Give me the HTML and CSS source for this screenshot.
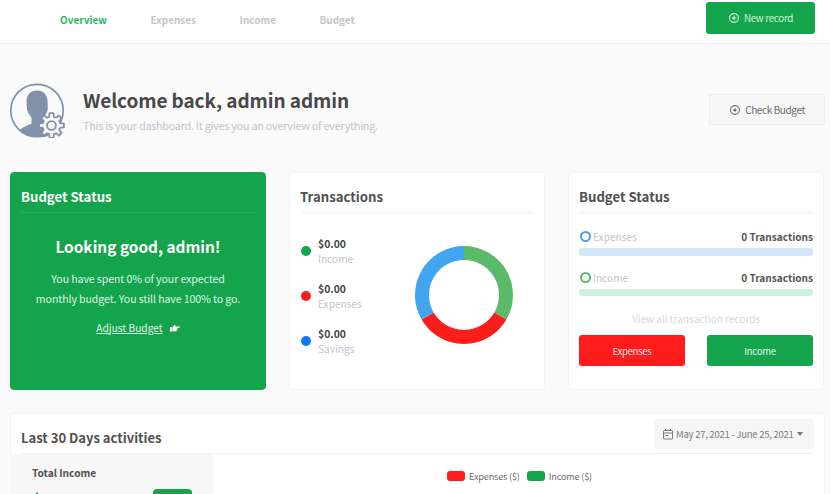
FILE: index.html
```html
<!DOCTYPE html>
<html lang="en">
<head>
  <meta charset="UTF-8" />
  <meta name="viewport" content="width=device-width, initial-scale=1.0"/>
  <title>Dashboard</title>
  <link rel="stylesheet" href="styles.css">
</head>
<body>
  <header class="topbar">
    <nav class="nav">
      <a class="nav-link active">Overview</a>
      <a class="nav-link">Expenses</a>
      <a class="nav-link">Income</a>
      <a class="nav-link">Budget</a>
    </nav>
    <button class="btn-new">
      <svg class="icon-sm" viewBox="0 0 12 12"><circle cx="6" cy="6" r="4.4" fill="none" stroke="currentColor" stroke-width="1.1"/><path d="M6 3.8v4.4M3.8 6h4.4" stroke="currentColor" stroke-width="1.1"/></svg>
      New record
    </button>
  </header>

  <main class="page">
    <section class="hero">
      <svg class="avatar" viewBox="0 0 55 55">
        <circle cx="27" cy="27.5" r="26.2" fill="none" stroke="#8091a9" stroke-width="1.7"/>
        <path d="M27 7.5C33.5 7.5 37.5 11.5 37.7 19.5L37.7 26.5C37 30.5 35 32.5 33.5 34.5L33.5 37.5L37.5 53.5L27 54.1C19.5 54.1 13.5 51.5 9.5 47.5C11.5 44.5 17.5 42.5 21.5 40.5L21.5 34.5C19 31.5 17.3 28.5 16.9 25.5L16.5 19.5C16.5 11.5 20.5 7.5 27 7.5Z" fill="#8091a9"/>
        <g transform="translate(41.5 42.5)">
          <polygon points="8.69,-2.33 12.35,-1.96 12.35,1.96 8.69,2.33 7.79,4.5 10.11,7.35 7.35,10.11 4.5,7.79 2.33,8.69 1.96,12.35 -1.96,12.35 -2.33,8.69 -4.5,7.79 -7.35,10.11 -10.11,7.35 -7.79,4.5 -8.69,2.33 -12.35,1.96 -12.35,-1.96 -8.69,-2.33 -7.79,-4.5 -10.11,-7.35 -7.35,-10.11 -4.5,-7.79 -2.33,-8.69 -1.96,-12.35 1.96,-12.35 2.33,-8.69 4.5,-7.79 7.35,-10.11 10.11,-7.35 7.79,-4.5" fill="#fafafa" stroke="#8091a9" stroke-width="1.8" stroke-linejoin="round"/>
          <circle r="4.4" fill="none" stroke="#8091a9" stroke-width="1.8"/>
        </g>
      </svg>
      <div class="hero-text">
        <h1>Welcome back, admin admin</h1>
        <p>This is your dashboard. It gives you an overview of everything.</p>
      </div>
      <button class="btn-check">
        <svg class="icon-sm" viewBox="0 0 12 12"><circle cx="6" cy="6" r="4.4" fill="none" stroke="currentColor" stroke-width="1.1"/><circle cx="6" cy="6" r="1.6" fill="currentColor"/></svg>
        Check Budget
      </button>
    </section>

    <section class="cards">
      <div class="card card-green">
        <h2 class="card-title">Budget Status</h2>
        <div class="status-body">
          <h3>Looking good, admin!</h3>
          <p>You have spent 0% of your expected<br>monthly budget. You still have 100% to go.</p>
          <div class="adjust">
            <a>Adjust Budget</a>
            <svg class="hand" viewBox="0 0 11 8"><path d="M0 3h2v5H0zM2.6 3.2L5 .6c.5-.5 1.2 0 .9.7L5.5 2.3H10c1.2 0 1.2 1.5 0 1.5H8.2c.5.7.1 1.3-.3 1.4.2.7-.2 1.2-.7 1.3.1.8-.5 1.2-1.1 1.2H4.3C3.5 7.7 3 7.2 2.6 7z" fill="#fff"/></svg>
          </div>
        </div>
      </div>

      <div class="card">
        <h2 class="card-title">Transactions</h2>
        <div class="trans-body">
          <ul class="trans-list">
            <li><span class="dot dot-green"></span><div><b>$0.00</b><span class="muted">Income</span></div></li>
            <li><span class="dot dot-red"></span><div><b>$0.00</b><span class="muted">Expenses</span></div></li>
            <li><span class="dot dot-blue"></span><div><b>$0.00</b><span class="muted">Savings</span></div></li>
          </ul>
          <svg class="donut" viewBox="0 0 100 100" fill="none" stroke-width="14">
            <path d="M50 8A42 42 0 0 1 86.37 71" stroke="#5cbb6a"/>
            <path d="M86.37 71A42 42 0 0 1 13.63 71" stroke="#ff1c1c"/>
            <path d="M13.63 71A42 42 0 0 1 50 8" stroke="#42a5f0"/>
          </svg>
        </div>
      </div>

      <div class="card">
        <h2 class="card-title">Budget Status</h2>
        <div class="bar-group">
          <div class="bar-head">
            <span class="ring ring-blue"></span><span class="muted">Expenses</span>
            <b>0 Transactions</b>
          </div>
          <div class="bar bar-blue"></div>
        </div>
        <div class="bar-group">
          <div class="bar-head">
            <span class="ring ring-green"></span><span class="muted">Income</span>
            <b>0 Transactions</b>
          </div>
          <div class="bar bar-green"></div>
        </div>
        <a class="view-all">View all transaction records</a>
        <div class="btn-row">
          <button class="btn btn-red">Expenses</button>
          <button class="btn btn-green">Income</button>
        </div>
      </div>
    </section>

    <section class="card activity">
      <div class="activity-head">
        <h2>Last 30 Days activities</h2>
        <button class="date-btn">
          <svg class="icon-sm" viewBox="0 0 12 12" fill="none" stroke="currentColor"><rect x="1.5" y="2.5" width="9" height="8.5" rx=".6"/><path d="M1.5 5h9M3.5 1v2M8.5 1v2M3.5 7.5h3"/></svg>
          May 27, 2021 - June 25, 2021
          <span class="caret"></span>
        </button>
      </div>
      <div class="activity-body">
        <aside class="side">
          <h4>Total Income</h4>
          <div class="side-row">
            <svg class="arrow" viewBox="0 0 10 12"><path d="M5 0l4 5H6v7H4V5H1z" fill="#14a54c"/></svg>
            <span class="badge"></span>
          </div>
        </aside>
        <div class="chart">
          <div class="legend">
            <span class="swatch swatch-red"></span><span>Expenses ($)</span>
            <span class="swatch swatch-green"></span><span>Income ($)</span>
          </div>
        </div>
      </div>
    </section>
  </main>
</body>
</html>
```

FILE: styles.css
```css
html, body {
  height: 100%;
  overflow: hidden;
}
body {
  margin: 0;
  background: #fafafa;
  color: #4a4a4a;
  font-family: "Noto Sans CJK SC", "Open Sans", sans-serif;
  font-size: 12px;
}
h1, h2, h3, h4, p, ul {
  margin: 0;
  padding: 0;
}
button {
  font-family: inherit;
  cursor: pointer;
}
.icon-sm {
  width: 12px;
  height: 12px;
  flex: none;
}

/* top bar */
.topbar {
  display: flex;
  justify-content: space-between;
  height: 41px;
  padding: 2px 15px 0 60px;
  background: #fff;
  border-bottom: 1px solid #f0f0f0;
}
.nav {
  display: flex;
  gap: 43.5px;
  height: 34px;
  align-items: center;
}
.nav-link {
  color: #c3c6cc;
  font-size: 10px;
  font-weight: 700;
}
.nav-link.active {
  color: #2bb866;
}
.btn-new {
  display: flex;
  align-items: center;
  justify-content: center;
  gap: 4px;
  width: 109px;
  height: 32px;
  border: 0;
  border-radius: 3px;
  background: #14a54c;
  color: #d5f3e0;
  font-size: 9.8px;
  letter-spacing: -0.3px;
}

/* hero */
.page {
  padding: 38px 5px 0 10px;
}
.hero {
  display: flex;
  align-items: center;
  height: 56px;
  margin-bottom: 34px;
}
.avatar {
  width: 55px;
  height: 55px;
  flex: none;
  margin-right: 18px;
}
.hero-text {
  flex: 1;
  padding-bottom: 1px;
}
.hero-text h1 {
  font-size: 19px;
  line-height: 27px;
  font-weight: 700;
  color: #484848;
  letter-spacing: -0.1px;
}
.hero-text p {
  margin-top: 4px;
  font-size: 10.8px;
  line-height: 16px;
  color: #bfc6cf;
  letter-spacing: -0.25px;
}
.btn-check {
  display: flex;
  align-items: center;
  justify-content: center;
  gap: 4px;
  width: 116px;
  height: 31px;
  margin-bottom: 1px;
  border: 1px solid #ececec;
  border-radius: 2px;
  background: #f7f7f7;
  color: #6b6b6b;
  font-size: 10px;
  letter-spacing: -0.4px;
}

/* cards */
.cards {
  display: grid;
  grid-template-columns: repeat(3, 256px);
  gap: 23px;
  margin-bottom: 23px;
}
.card {
  height: 218px;
  box-sizing: border-box;
  padding: 0 10px;
  background: #fff;
  border: 1px solid #f3f3f3;
  border-radius: 4px;
}
.card-title {
  height: 40px;
  padding-top: 14px;
  box-sizing: border-box;
  border-bottom: 1px solid #f1f1f1;
  font-size: 13.2px;
  line-height: 20px;
  font-weight: 700;
  color: #505050;
}
.card-green {
  background: #14a54c;
  border-color: #14a54c;
  color: #dff6e7;
}
.card-green .card-title {
  color: #fff;
  border-bottom-color: #2bb25e;
}
.status-body {
  text-align: center;
}
.status-body h3 {
  margin-top: 21px;
  font-size: 15.4px;
  line-height: 24px;
  font-weight: 700;
  color: #fff;
}
.status-body p {
  margin-top: 11px;
  font-size: 10.6px;
  line-height: 19.5px;
  letter-spacing: -0.1px;
}
.adjust {
  display: flex;
  justify-content: center;
  align-items: center;
  gap: 7px;
  margin-top: 10px;
  font-size: 10.2px;
  line-height: 20px;
}
.adjust a {
  text-decoration: underline;
}
.hand {
  width: 10px;
  height: 8px;
}

/* transactions */
.trans-body {
  display: flex;
  justify-content: space-between;
  align-items: center;
  padding: 21px 20px 0 1px;
}
.trans-list {
  list-style: none;
  display: flex;
  flex-direction: column;
  gap: 15px;
  margin-top: 2px;
}
.trans-list li {
  display: flex;
  align-items: center;
  gap: 7px;
}
.trans-list b {
  display: block;
  font-size: 10.4px;
  line-height: 15px;
  color: #444;
}
.muted {
  color: #bfc5cc;
  font-size: 10.1px;
  line-height: 15px;
}
.trans-list .muted {
  display: block;
}
.dot {
  width: 10px;
  height: 10px;
  border-radius: 50%;
}
.dot-green { background: #14a54c; }
.dot-red { background: #ff1c1c; }
.dot-blue { background: #0a7aff; }
.donut {
  width: 100px;
  height: 100px;
}

/* budget bars */
.bar-group {
  margin-top: 14px;
}
.bar-group + .bar-group {
  margin-top: 12px;
}
.bar-head {
  display: flex;
  align-items: center;
  gap: 2px;
  height: 18px;
  margin-bottom: 3px;
}
.bar-head b {
  margin-left: auto;
  font-size: 10.1px;
  color: #555;
}
.ring {
  width: 11px;
  height: 11px;
  margin-left: 1px;
  box-sizing: border-box;
  border: 2px solid;
  border-radius: 50%;
}
.ring-blue { border-color: #4a9ff5; }
.ring-green { border-color: #5cbb6a; }
.bar {
  height: 8px;
  border-radius: 3px;
}
.bar-blue { background: #d0e6f8; }
.bar-green { height: 7px; background: #cdf3df; }
.view-all {
  display: block;
  margin-top: 14px;
  font-size: 10px;
  line-height: 18px;
  color: #d3d8dd;
  text-align: center;
}
.btn-row {
  display: flex;
  justify-content: space-between;
  margin-top: 7px;
}
.btn {
  width: 106px;
  height: 31px;
  border: 0;
  border-radius: 3px;
  font-size: 9.6px;
  letter-spacing: -0.3px;
  color: #e6f5ea;
}
.btn-red { background: #ff1c1c; color: #ffe0e0; }
.btn-green { background: #14a54c; }

/* last 30 days */
.activity {
  height: 200px;
}
.activity-head {
  display: flex;
  justify-content: space-between;
  height: 40px;
  padding-top: 5px;
  box-sizing: border-box;
  border-bottom: 1px solid #f1f1f1;
}
.activity-head h2 {
  padding-top: 9px;
  font-size: 13px;
  line-height: 20px;
  font-weight: 700;
  color: #505050;
}
.date-btn {
  display: flex;
  align-items: center;
  gap: 2px;
  width: 160px;
  height: 30px;
  padding: 0 0 0 8px;
  border: 0;
  border-radius: 3px;
  background: #f6f6f6;
  color: #7a7a7a;
  font-size: 9.5px;
  letter-spacing: -0.25px;
  white-space: nowrap;
}
.caret {
  width: 0;
  height: 0;
  margin-left: 1px;
  border: 3.5px solid transparent;
  border-top: 4px solid #777;
  border-bottom: 0;
}
.activity-body {
  display: flex;
  margin-left: -11px;
}
.side {
  width: 203px;
  height: 158px;
  padding: 12px 21px 0 22px;
  box-sizing: border-box;
  background: #f7f7f7;
}
.side h4 {
  font-size: 10.2px;
  line-height: 14px;
  font-weight: 700;
  color: #505050;
}
.side-row {
  display: flex;
  justify-content: space-between;
  align-items: flex-start;
  margin-top: 9px;
}
.arrow {
  width: 10px;
  height: 12px;
  margin-top: 3px;
}
.badge {
  width: 39px;
  height: 22px;
  border-radius: 4px;
  background: #14a54c;
}
.chart {
  flex: 1;
}
.legend {
  display: flex;
  align-items: center;
  gap: 4px;
  padding: 14px 0 0 234px;
  font-size: 9.2px;
  letter-spacing: -0.2px;
  line-height: 16px;
  color: #6e6e6e;
}
.swatch {
  width: 18px;
  height: 10px;
  border-radius: 3px;
}
.swatch-green {
  margin-left: 3px;
  background: #14a54c;
}
.swatch-red {
  background: #ff1c1c;
}
```
